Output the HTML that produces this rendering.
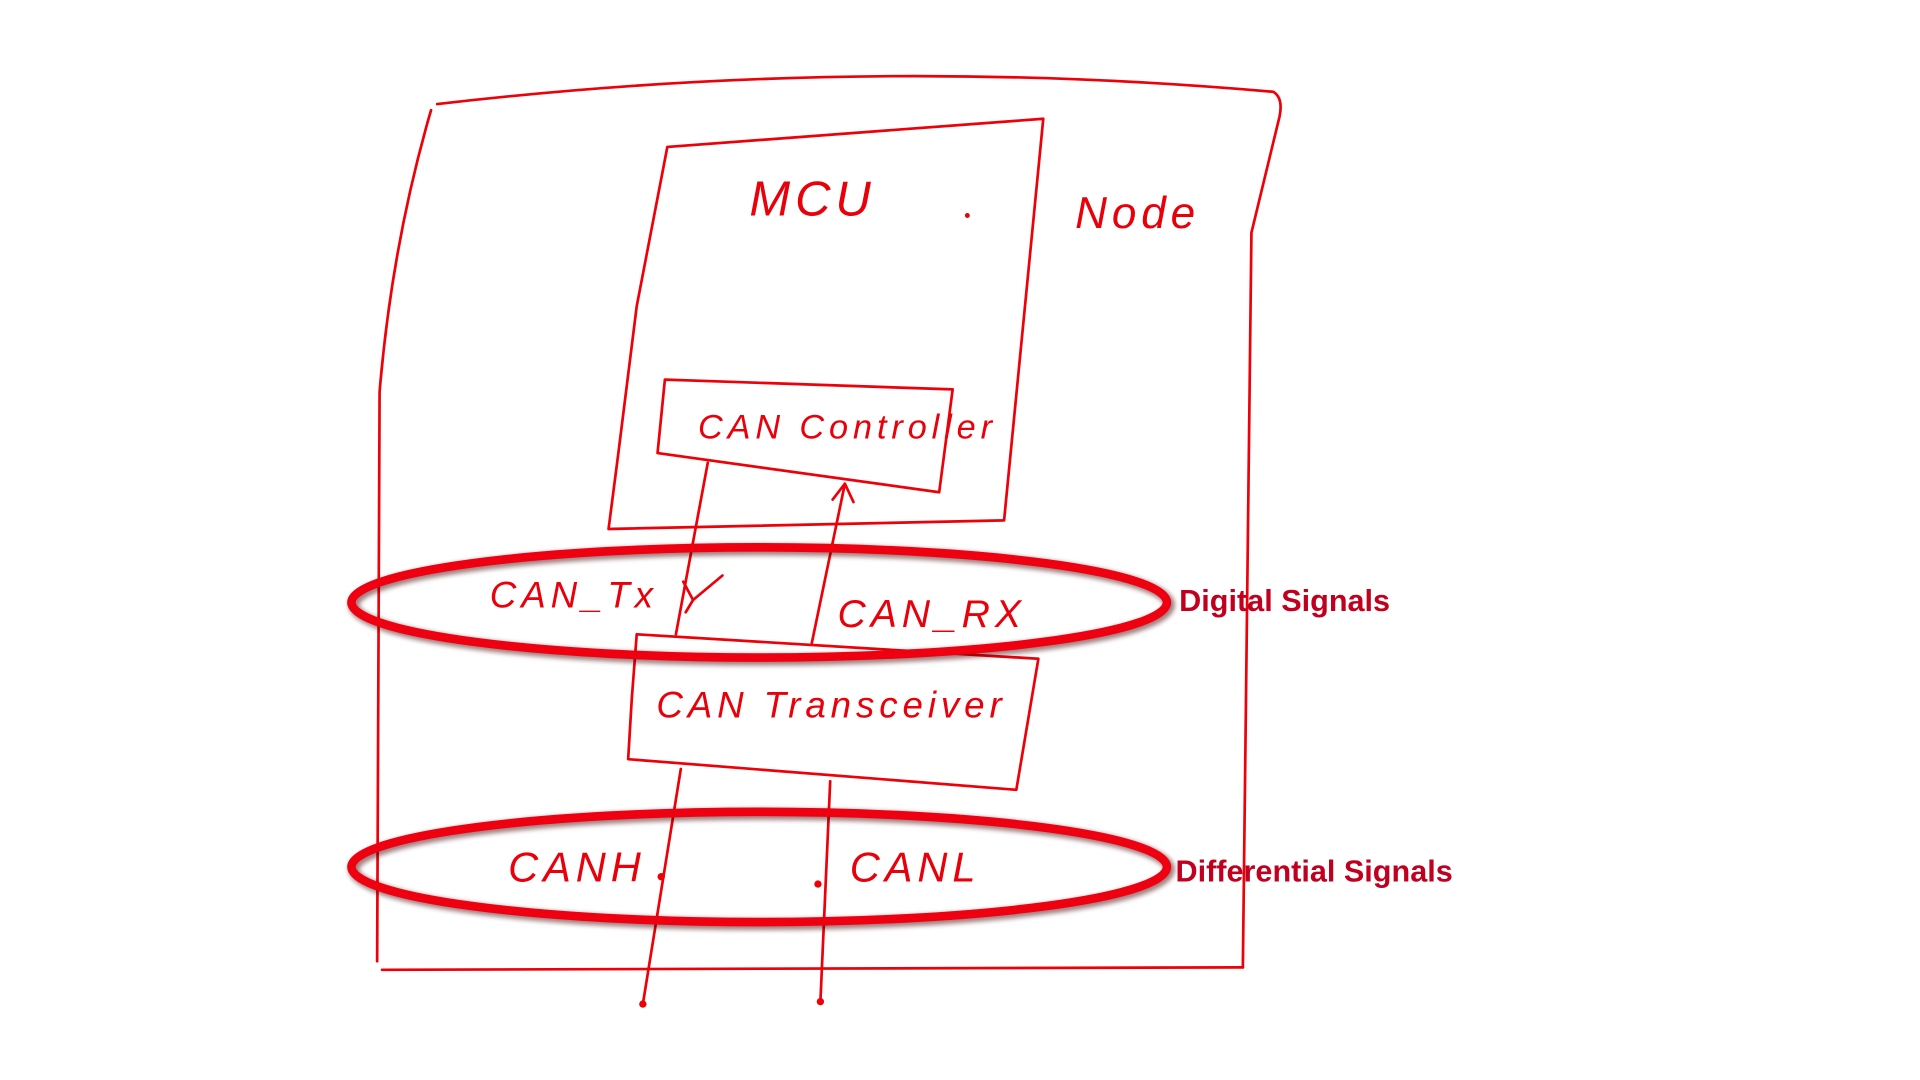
<!DOCTYPE html>
<html><head><meta charset="utf-8"><style>
html,body{margin:0;padding:0;background:#fff;width:1920px;height:1080px;overflow:hidden}
svg{display:block}
.h{font-family:"Liberation Sans",sans-serif;fill:#e8000a;font-size:34px;font-style:italic;letter-spacing:4px}
.l{font-family:"Liberation Sans",sans-serif;fill:#c0001e;font-size:25px;font-weight:bold}
</style></head><body>
<svg width="1920" height="1080" viewBox="0 0 1568 882" preserveAspectRatio="none">
<defs><filter id="sh"><feGaussianBlur stdDeviation="2"/></filter></defs>
<g fill="none" stroke="#ee0008" stroke-width="2.2" stroke-linecap="round" stroke-linejoin="round">
<path d="M357,85 Q700,45 1040,75 Q1048,80 1045,95 L1022,190 L1015,790"/>
<path d="M352,90 Q320,200 310,320 L308,785"/>
<path d="M312,792 L1015,790"/>
<path d="M545,120 L852,97 L820,425 L497,432 L505,370 L520,250 Z"/>
<path d="M543,310 L778,318 L767,402 L537,370 Z"/>
<path d="M520,518 L848,538 L830,645 L513,620 L516,570 Z"/>
<path d="M578,378 L552,518"/>
<path d="M663,525 L690,395 M680,408 L690,395 L697,410"/>
<path d="M556,628 L525,820"/>
<path d="M678,638 L670,818"/>
<path d="M558,475 L566,490 L590,470 M566,490 L560,500"/>
</g>
<g fill="#ee0008"><circle cx="790" cy="176" r="2"/><circle cx="525" cy="820" r="3"/><circle cx="670" cy="818" r="3"/><circle cx="540" cy="716" r="3"/><circle cx="668" cy="722" r="3"/></g>
<g fill="none">
<ellipse cx="622" cy="494" rx="333" ry="45" stroke="#400" stroke-width="9" opacity=".5" filter="url(#sh)"/>
<ellipse cx="620" cy="492" rx="333" ry="45" stroke="#ee0010" stroke-width="7"/>
<ellipse cx="622" cy="710" rx="333" ry="45" stroke="#400" stroke-width="9" opacity=".5" filter="url(#sh)"/>
<ellipse cx="620" cy="708" rx="333" ry="45" stroke="#ee0010" stroke-width="7"/>
</g>
<text class="h" x="612" y="176" style="font-size:40px">MCU</text>
<text class="h" x="878" y="186" style="font-size:36px">Node</text>
<text class="h" x="570" y="358" style="font-size:28px">CAN Controller</text>
<text class="h" x="400" y="496" style="font-size:30px">CAN_Tx</text>
<text class="h" x="684" y="512" style="font-size:32px">CAN_RX</text>
<text class="h" x="536" y="586" style="font-size:30px">CAN Transceiver</text>
<text class="h" x="415" y="720" style="font-size:34px">CANH</text>
<text class="h" x="694" y="720" style="font-size:34px">CANL</text>
<text class="l" x="963" y="499">Digital Signals</text>
<text class="l" x="960" y="720">Differential Signals</text>
</svg>
</body></html>
